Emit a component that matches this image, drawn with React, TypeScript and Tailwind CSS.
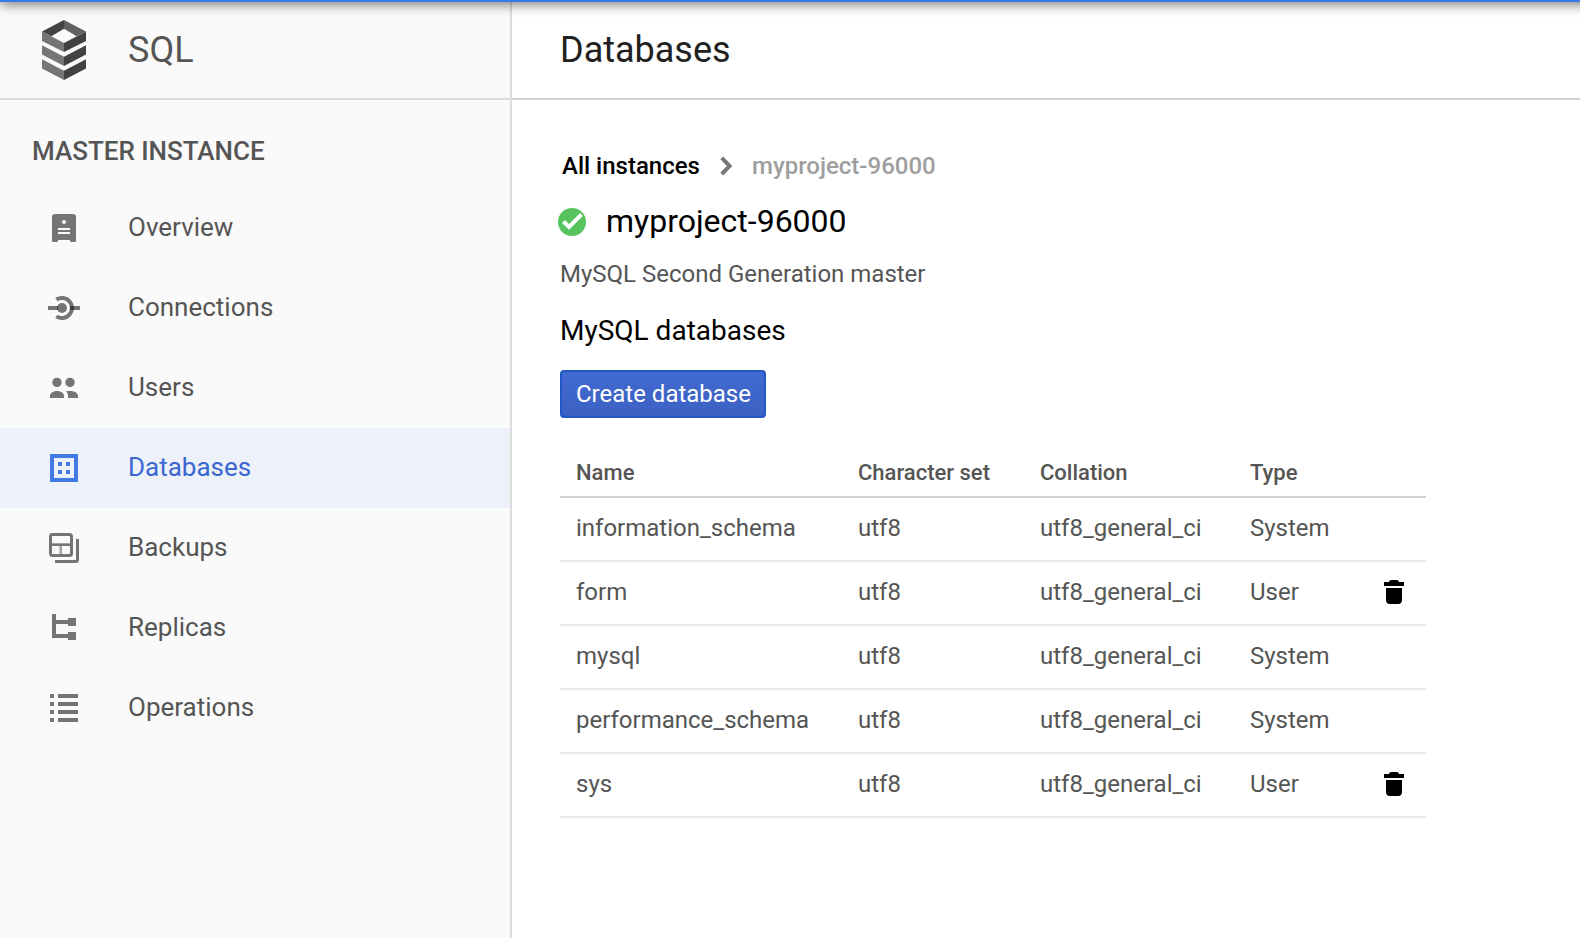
import type { ReactNode } from "react";

const nav: { label: string; icon: ReactNode; active?: boolean }[] = [
  {
    label: "Overview",
    icon: (
      <path
        fillRule="evenodd"
        d="M7 2H25a3 3 0 0 1 3 3V29a1 1 0 0 1-1 1H23a1 1 0 0 1-1-1V28H10v1a1 1 0 0 1-1 1H5a1 1 0 0 1-1-1V5a3 3 0 0 1 3-3zM16 8a2 2 0 1 0 0 4a2 2 0 0 0 0-4zM10 16v2h12v-2zM10 20v2h12v-2z"
      />
    ),
  },
  {
    label: "Connections",
    icon: (
      <>
        <path d="M0 14H10V18H0zM22 14H32V18H22z" />
        <circle cx="14" cy="16" r="5" />
        <path d="M8.4 7.7A10 10 0 1 1 8.4 24.3" fill="none" stroke="currentColor" strokeWidth="4" />
        <path d="M9 14H10V18H9zM22 14H26V18H22z" fill="#3d3d3d" />
      </>
    ),
  },
  {
    label: "Users",
    icon: (
      <>
        <circle cx="9" cy="10.4" r="4.7" />
        <circle cx="22" cy="10.4" r="4.7" />
        <path d="M2 26v-2c0-3.2 3.8-5 7-5s7 1.800 7 5v2zM18 19.300c1.200-.2 2.400-.3 4-.3 4.200 0 8 1.800 8 5v2H20v-2c0-1.900-.7-3.500-2-4.700z" />
      </>
    ),
  },
  {
    label: "Databases",
    active: true,
    icon: (
      <path
        fillRule="evenodd"
        d="M2 2H30V30H2zM6 6V26H26V6zM10 10h4v4h-4zM18 10h4v4h-4zM10 18h4v4h-4zM18 18h4v4h-4z"
      />
    ),
  },
  {
    label: "Backups",
    icon: (
      <>
        <path d="M3 11H24V12H3zM11.500 14H14V24H11.500z" opacity=".65" />
        <path d="M3 12H24V14H3z" />
        <rect x="2.500" y="2.500" width="21" height="21" rx="2" fill="none" stroke="currentColor" strokeWidth="3" />
        <path d="M29.500 7V27.500a2 2 0 0 1-2 2H7" fill="none" stroke="currentColor" strokeWidth="3" />
      </>
    ),
  },
  {
    label: "Replicas",
    icon: <path d="M4 2H8V8H20V6H28V14H20V12H8V22H20V20H28V28H20V26H4z" />,
  },
  {
    label: "Operations",
    icon: (
      <path d="M2 2h4v4H2zM10 2h20v4H10zM2 10h4v4H2zM10 10h20v4H10zM2 18h4v4H2zM10 18h20v4H10zM2 26h4v4H2zM10 26h20v4H10z" />
    ),
  },
];

const rows = [
  { name: "information_schema", type: "System" },
  { name: "form", type: "User" },
  { name: "mysql", type: "System" },
  { name: "performance_schema", type: "System" },
  { name: "sys", type: "User" },
];

function SqlLogo() {
  return (
    <svg width="44" height="60" viewBox="0 0 44 60">
      <path fill="#424242" d="M0 11.500L22 0V8.700L9.300 16.200zM44 11.500L22 23V32L44 21zM44 25.200L22 36.800V46L44 34.500zM44 39.200L22 50.800V60L44 48.500z" />
      <path fill="#616161" d="M22 0L44 11.500L34.700 16.200L22 8.700z" />
      <path fill="#757575" d="M0 11.500L22 23V32L0 21zM0 25.200L22 36.800V46L0 34.500zM0 39.200L22 50.800V60L0 48.500z" />
    </svg>
  );
}

function TrashIcon() {
  return (
    <svg width="20" height="24" viewBox="0 0 20 24">
      <path d="M0 2H5a3 2 0 0 1 3-2H12a3 2 0 0 1 3 2H20V6H0zM2 8H18V20a4 4 0 0 1-4 4H6a4 4 0 0 1-4-4z" />
    </svg>
  );
}

export default function App() {
  return (
    <div className="relative flex h-[938px] w-[1580px] flex-col overflow-hidden bg-white font-['Roboto',sans-serif] text-[#555]">
      <div className="z-10 -mt-12 h-[50px] w-[1620px] shrink-0 bg-[#3b78e7] shadow-[0_2px_12px_rgba(0,0,0,0.55)]" />
      <div className="flex min-h-0 flex-1">
        <aside className="flex w-[512px] shrink-0 flex-col border-r-2 border-[#dcdcdc] bg-[#fafafa]">
          <header className="flex h-[98px] items-center border-b-2 border-[#dcdcdc] pl-[42px]">
            <SqlLogo />
            <h1 className="ml-[42px] text-4xl leading-10">SQL</h1>
          </header>
          <h2 className="mt-[31px] pl-8 text-[26px] leading-10 font-medium tracking-[-0.02px]">MASTER INSTANCE</h2>
          <nav className="mt-[17px]">
            {nav.map((item) => (
              <a
                key={item.label}
                className={
                  item.active
                    ? "flex h-20 items-center bg-[#ecf1fa] pl-12 text-[#3b67d0]"
                    : "flex h-20 items-center pl-12"
                }
              >
                <svg
                  width="32"
                  height="32"
                  viewBox="0 0 32 32"
                  fill="currentColor"
                  className={item.active ? "text-[#427ae2]" : "text-[#757575]"}
                >
                  {item.icon}
                </svg>
                <span className="ml-12 pb-0.5 text-[26px] leading-8">{item.label}</span>
              </a>
            ))}
          </nav>
        </aside>
        <main className="w-[1068px] shrink-0">
          <header className="flex h-[98px] items-center border-b-2 border-[#d0d0d0] pl-12">
            <h1 className="text-4xl leading-10 text-[#212121]">Databases</h1>
          </header>
          <div className="pl-12">
            <div className="mt-[50px] flex h-8 items-center pl-0.5 text-2xl leading-8 font-medium">
              <span className="w-[158px] text-black">All instances</span>
              <svg width="12" height="20" viewBox="0 0 12 20" className="mr-5">
                <path d="M1.800 1.800L9.500 10L1.800 18.200" fill="none" stroke="#757575" strokeWidth="4" />
              </svg>
              <span className="text-[#9e9e9e]">myproject-96000</span>
            </div>
            <div className="mt-5 flex h-10 items-center">
              <svg width="28" height="28" viewBox="0 0 28 28" className="-ml-0.5">
                <circle cx="14" cy="14" r="14" fill="#57c35f" />
                <path d="M5.500 13.500L11 19L23.500 6.500" fill="none" stroke="#fff" strokeWidth="4" />
              </svg>
              <span className="ml-5 pb-0.5 text-[32px] leading-10 text-black">myproject-96000</span>
            </div>
            <p className="mt-4 text-2xl leading-8">MySQL Second Generation master</p>
            <h2 className="mt-[25px] text-[28px] leading-8 text-black">MySQL databases</h2>
            <button className="mt-[23px] flex h-12 w-[206px] items-center rounded border-2 border-[#2258c6] bg-linear-to-b from-[#4169d1] to-[#3b62c2] pl-3.5 text-2xl whitespace-nowrap text-white">
              Create database
            </button>
            <div className="mt-[30px] w-[866px]">
              <div className="grid h-[50px] grid-cols-[282px_182px_210px_1fr] items-center border-b-2 border-[#d3d3d3] pl-4 text-[22px] font-medium">
                <span>Name</span>
                <span>Character set</span>
                <span>Collation</span>
                <span>Type</span>
              </div>
              {rows.map((row) => (
                <div
                  key={row.name}
                  className="grid h-16 grid-cols-[282px_182px_210px_134px_1fr] items-center border-b-2 border-[#e9e9e9] pb-0.5 pl-4 text-2xl"
                >
                  <span>{row.name}</span>
                  <span>utf8</span>
                  <span>utf8_general_ci</span>
                  <span>{row.type}</span>
                  {row.type === "User" && <TrashIcon />}
                </div>
              ))}
            </div>
          </div>
        </main>
      </div>
    </div>
  );
}
